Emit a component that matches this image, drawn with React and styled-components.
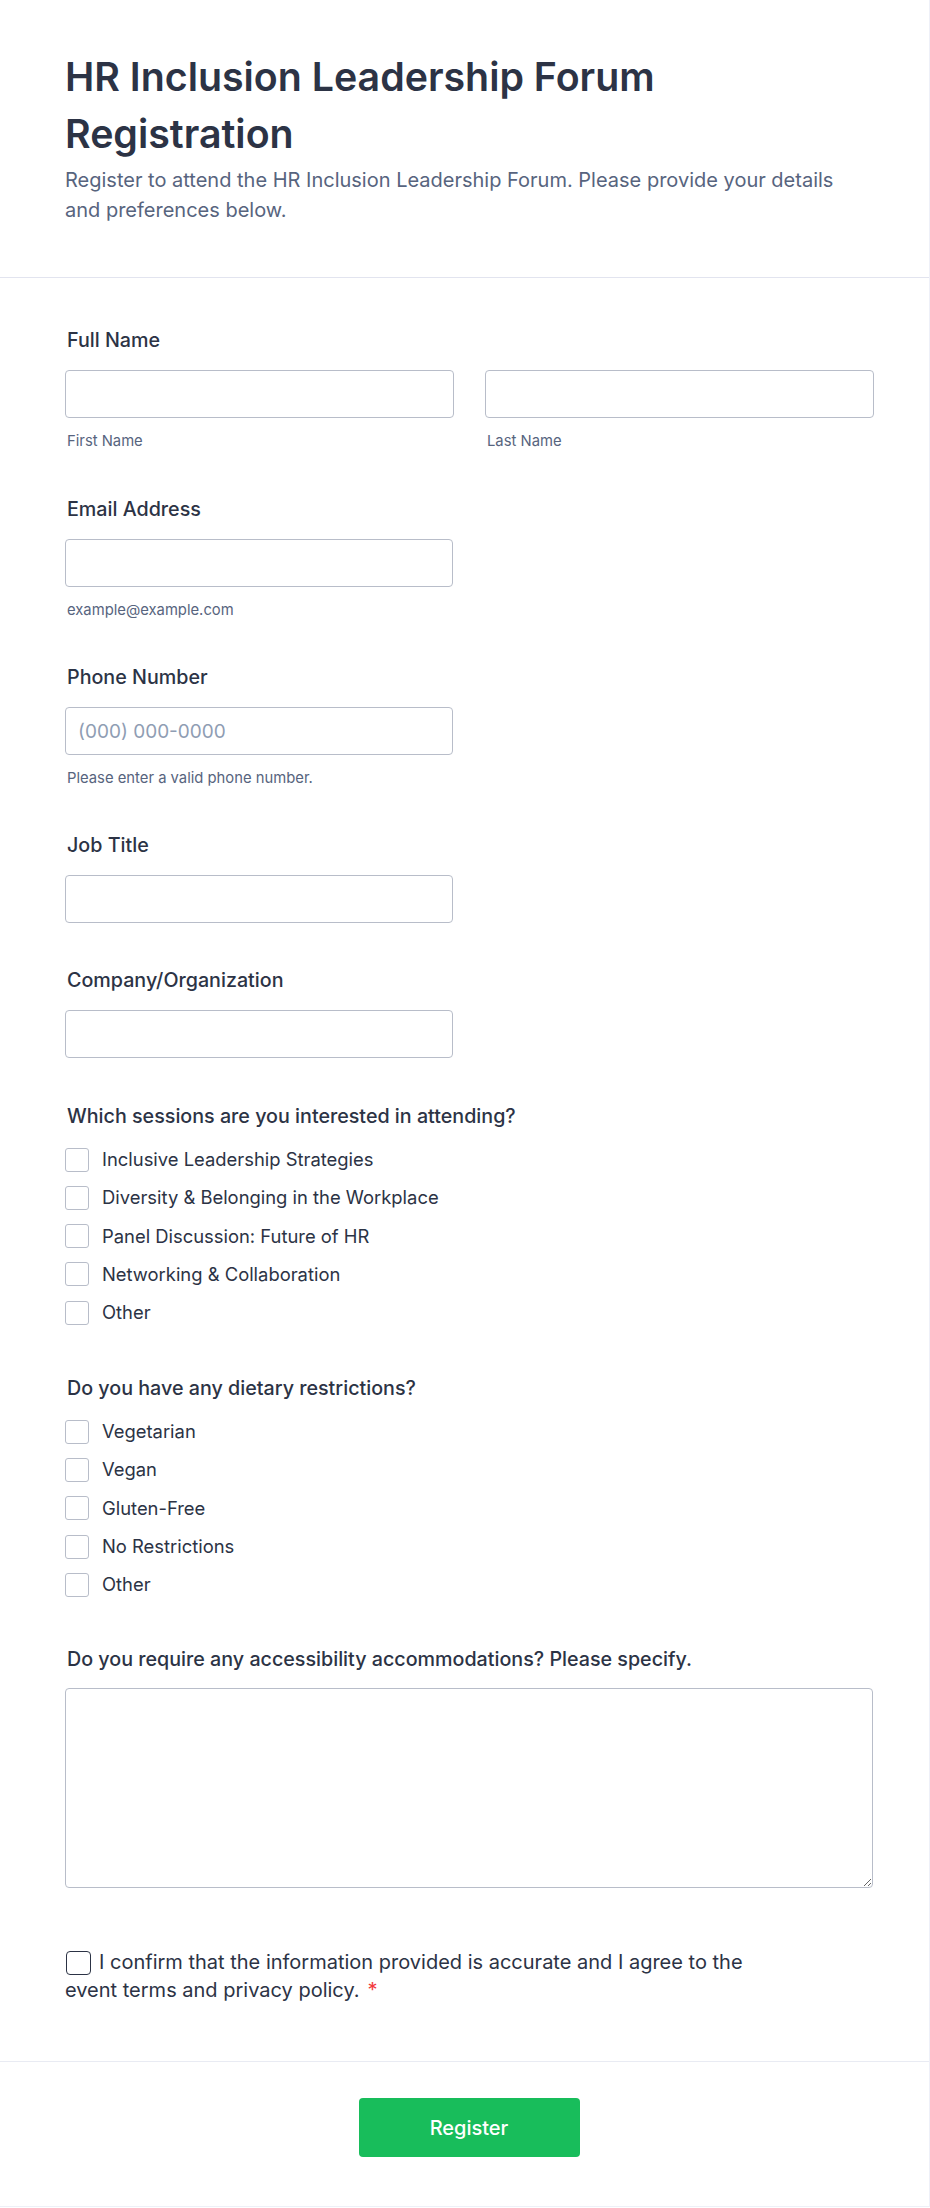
import React from "react";
import styled, { createGlobalStyle } from "styled-components";

const GlobalStyle = createGlobalStyle`
  html, body { margin: 0; padding: 0; background: #ffffff; }
  body { font-family: Inter, "Noto Sans", Arial, sans-serif; color: #2c3345; }
  * { box-sizing: border-box; }
`;

const Card = styled.div`
  width: 100%;
  background: #fff;
  border-right: 1px solid #eef0f8;
  border-bottom: 1px solid #eef0f8;
`;

const Header = styled.header`
  padding: 48px 56px 52px 65px;
  border-bottom: 1px solid #e2e4ef;
`;

const Title = styled.h1`
  margin: 0;
  font-size: 39.3px;
  line-height: 57px;
  font-weight: 600;
  color: #2c3345;
  max-width: 700px;
`;

const Subtitle = styled.p`
  margin: 3px 0 0;
  font-size: 20px;
  line-height: 30px;
  color: #57647e;
`;

const Body = styled.div`
  padding: 47px 56px 0 65px;
`;

const Field = styled.div`
  margin-bottom: ${(p) => p.$mb || 41}px;
`;

const Label = styled.div`
  font-size: 19.7px;
  line-height: 30px;
  font-weight: 500;
  color: #2c3345;
  padding-left: 2px;
  margin-bottom: ${(p) => p.$mb || 15}px;
`;

const NameRow = styled.div`
  display: grid;
  grid-template-columns: 389px 389px;
  column-gap: 31px;
`;

const Input = styled.input`
  display: block;
  width: ${(p) => (p.$full ? "100%" : "388px")};
  height: 48px;
  border: 1px solid #b8bdc9;
  border-radius: 4px;
  padding: 0 12px;
  font-family: inherit;
  font-size: 19px;
  color: #2c3345;
  background: #fff;
  outline: none;
  &::placeholder { color: #8f9db3; }
`;

const Sub = styled.div`
  margin-top: 13px;
  font-size: 14.8px;
  line-height: 21px;
  color: #57647e;
  padding-left: 2px;
`;

const Options = styled.div`
  display: flex;
  flex-direction: column;
  gap: 11.3px;
`;

const Option = styled.label`
  display: flex;
  align-items: center;
  gap: 13px;
  font-size: 18.4px;
  line-height: 27px;
  color: #2c3345;
`;

const Box = styled.span`
  width: 24px;
  height: 24px;
  border: 1px solid #b8bdc9;
  border-radius: 3px;
  background: #fff;
  flex: none;
`;

const TextArea = styled.textarea`
  display: block;
  width: 100%;
  height: 200px;
  border: 1px solid #b8bdc9;
  border-radius: 4px;
  font-family: inherit;
  font-size: 18px;
  padding: 10px 14px;
  outline: none;
`;

const Confirm = styled.div`
  padding: 19px 0 57px 0;
  max-width: 700px;
  font-size: 20px;
  line-height: 28px;
  color: #2c3345;
`;

const ConfirmBox = styled.span`
  display: inline-block;
  vertical-align: -6px;
  width: 25px;
  height: 24px;
  margin: 0 8px 0 1px;
  border: 1.5px solid #2c3345;
  border-radius: 4px;
`;

const Required = styled.span`
  color: #f23a3c;
  margin-left: 8px;
`;

const Footer = styled.footer`
  border-top: 1px solid #e9ebf3;
  padding: 36px 56px 49px 65px;
  display: flex;
  justify-content: center;
`;

const Button = styled.button`
  width: 221px;
  height: 59px;
  border: none;
  border-radius: 4px;
  background: #18bd5b;
  color: #fff;
  font-family: inherit;
  font-size: 20px;
  font-weight: 500;
`;

const sessions = [
  "Inclusive Leadership Strategies",
  "Diversity & Belonging in the Workplace",
  "Panel Discussion: Future of HR",
  "Networking & Collaboration",
  "Other",
];
const diets = ["Vegetarian", "Vegan", "Gluten-Free", "No Restrictions", "Other"];

function CheckGroup({ items }) {
  return (
    <Options>
      {items.map((t) => (
        <Option key={t}>
          <Box />
          {t}
        </Option>
      ))}
    </Options>
  );
}

export default function App() {
  return (
    <>
      <GlobalStyle />
      <Card>
        <Header>
          <Title>HR Inclusion Leadership Forum Registration</Title>
          <Subtitle>
            Register to attend the HR Inclusion Leadership Forum. Please provide your details and
            preferences below.
          </Subtitle>
        </Header>
        <Body>
          <Field $mb={42}>
            <Label>Full Name</Label>
            <NameRow>
              <div>
                <Input $full />
                <Sub>First Name</Sub>
              </div>
              <div>
                <Input $full />
                <Sub>Last Name</Sub>
              </div>
            </NameRow>
          </Field>
          <Field>
            <Label>Email Address</Label>
            <Input />
            <Sub>example@example.com</Sub>
          </Field>
          <Field>
            <Label>Phone Number</Label>
            <Input placeholder="(000) 000-0000" />
            <Sub>Please enter a valid phone number.</Sub>
          </Field>
          <Field $mb={42}>
            <Label>Job Title</Label>
            <Input />
          </Field>
          <Field $mb={43}>
            <Label>Company/Organization</Label>
            <Input />
          </Field>
          <Field $mb={47}>
            <Label $mb={15}>Which sessions are you interested in attending?</Label>
            <CheckGroup items={sessions} />
          </Field>
          <Field $mb={46}>
            <Label $mb={15}>Do you have any dietary restrictions?</Label>
            <CheckGroup items={diets} />
          </Field>
          <Field>
            <Label $mb={14}>Do you require any accessibility accommodations? Please specify.</Label>
            <TextArea />
          </Field>
          <Confirm>
            <ConfirmBox />
            I confirm that the information provided is accurate and I agree to the event terms and
            privacy policy.
            <Required>*</Required>
          </Confirm>
        </Body>
        <Footer>
          <Button>Register</Button>
        </Footer>
      </Card>
    </>
  );
}
